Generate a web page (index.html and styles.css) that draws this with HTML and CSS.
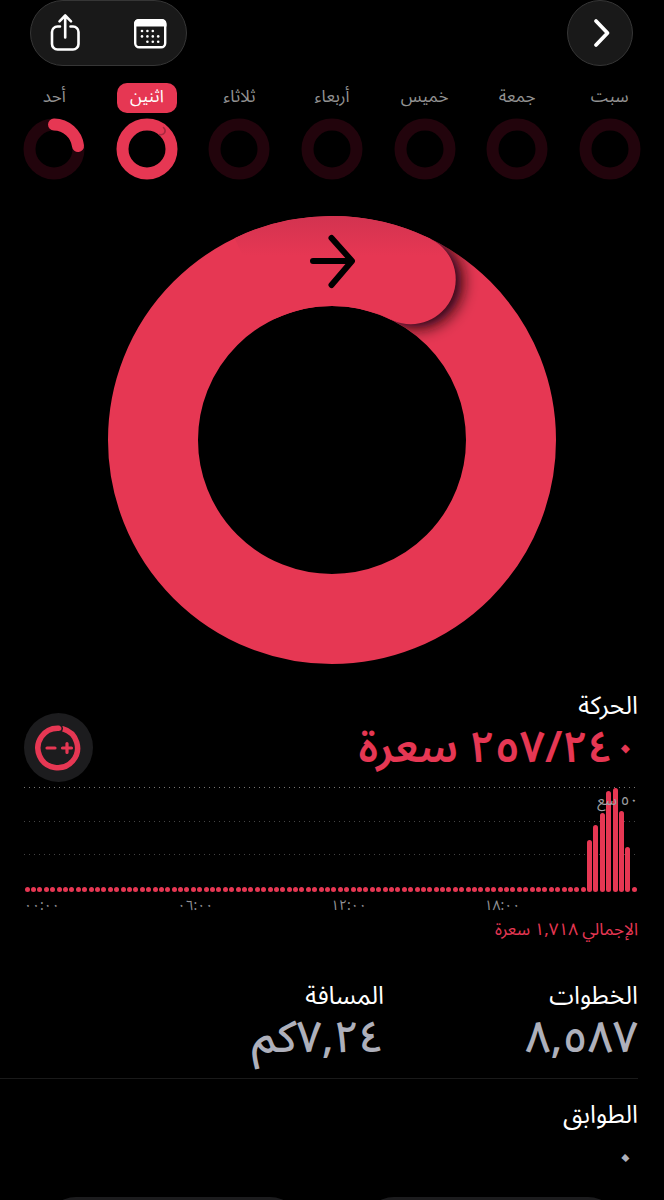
FILE: index.html
```html
<!DOCTYPE html>
<html lang="ar" dir="rtl">
<head>
<meta charset="utf-8">
<meta name="viewport" content="width=device-width, initial-scale=1">
<title>الحركة</title>
<link rel="stylesheet" href="styles.css">
</head>
<body>
<main class="screen">
  <header class="toolbar">
    <button class="glass round" type="button" aria-label="رجوع">
      <svg width="32" height="32" viewBox="0 0 32 32"><path d="M12 4 23.500 16 12 28" fill="none" stroke="#fff" stroke-width="3.800" stroke-linecap="round" stroke-linejoin="round"/></svg>
    </button>
    <div class="glass pill">
      <button class="tool" type="button" aria-label="التقويم">
        <svg width="36" height="40" viewBox="0 0 36 40">
          <rect x="3.200" y="7.200" width="30" height="27" rx="4" fill="none" stroke="#fff" stroke-width="2.400"/>
          <path d="M2 13.500V10.500A4.500 4.500 0 0 1 6.500 6H30A4.500 4.500 0 0 1 34.500 10.500V13.500Z" fill="#fff"/>
          <g fill="#fff"><circle cx="10" cy="18" r="1.300"/><circle cx="15.400" cy="18" r="1.300"/><circle cx="20.800" cy="18" r="1.300"/><circle cx="10" cy="23.400" r="1.300"/><circle cx="15.400" cy="23.400" r="1.300"/><circle cx="20.800" cy="23.400" r="1.300"/><circle cx="26.200" cy="23.400" r="1.300"/><circle cx="15.400" cy="28.800" r="1.300"/><circle cx="20.800" cy="28.800" r="1.300"/><circle cx="26.200" cy="28.800" r="1.300"/></g>
        </svg>
      </button>
      <button class="tool" type="button" aria-label="مشاركة">
        <svg width="36" height="40" viewBox="0 0 36 40"><g fill="none" stroke="#fff" stroke-width="2.600" stroke-linecap="round" stroke-linejoin="round"><path d="M13 13.500H10.500A5.500 5.500 0 0 0 5 19V31A5.500 5.500 0 0 0 10.500 36.500H26A5.500 5.500 0 0 0 31.500 31V19A5.500 5.500 0 0 0 26 13.500H23.500"/><path d="M18.200 24.500V3M12.500 8.300 18.200 2.500 24 8.300"/></g></svg>
      </button>
    </div>
  </header>

  <nav class="week" aria-label="الأسبوع">
    <button class="day" type="button"><span class="name">سبت</span><svg class="mini" viewBox="0 0 62 62"><circle class="track" cx="31" cy="31" r="24.500"/></svg></button>
    <button class="day" type="button"><span class="name">جمعة</span><svg class="mini" viewBox="0 0 62 62"><circle class="track" cx="31" cy="31" r="24.500"/></svg></button>
    <button class="day" type="button"><span class="name">خميس</span><svg class="mini" viewBox="0 0 62 62"><circle class="track" cx="31" cy="31" r="24.500"/></svg></button>
    <button class="day" type="button"><span class="name">أربعاء</span><svg class="mini" viewBox="0 0 62 62"><circle class="track" cx="31" cy="31" r="24.500"/></svg></button>
    <button class="day" type="button"><span class="name">ثلاثاء</span><svg class="mini" viewBox="0 0 62 62"><circle class="track" cx="31" cy="31" r="24.500"/></svg></button>
    <button class="day" type="button" aria-current="date"><span class="name selected">اثنين</span><svg class="mini" viewBox="0 0 62 62"><circle class="move" cx="31" cy="31" r="24.500"/><path d="M47.500 9.500C51 13 48.500 17.500 43.500 16.500" fill="none" stroke="#a82840" stroke-width="1.500" stroke-linecap="round"/></svg></button>
    <button class="day" type="button"><span class="name">أحد</span><svg class="mini" viewBox="0 0 62 62"><circle class="track" cx="31" cy="31" r="24.500"/><path class="move" d="M31 6.500A24.500 24.500 0 0 1 55 28"/></svg></button>
  </nav>

  <svg class="ring" viewBox="0 0 448 448" role="img" aria-label="حلقة الحركة">
    <defs>
      <clipPath id="band"><path clip-rule="evenodd" d="M0 224a224 224 0 1 0 448 0a224 224 0 1 0-448 0ZM90 224a134 134 0 1 0 268 0a134 134 0 1 0-268 0Z"/></clipPath>
      <filter id="soft" x="-50%" y="-50%" width="200%" height="200%"><feGaussianBlur stdDeviation="8"/></filter>
      <linearGradient id="shade" gradientUnits="userSpaceOnUse" x1="0" y1="0" x2="0" y2="40"><stop offset="0" stop-color="#d23350"/><stop offset="1" stop-color="#e63753"/></linearGradient>
    </defs>
    <circle cx="224" cy="224" r="179" fill="none" stroke="#e63753" stroke-width="90"/>
    <circle cx="308" cy="66" r="46" fill="#15030a" filter="url(#soft)" clip-path="url(#band)"/>
    <path d="M146 62.700A179 179 0 0 1 224 45A179 179 0 0 1 302.700 63.200" fill="none" stroke="url(#shade)" stroke-width="90"/>
    <circle cx="302.700" cy="63.200" r="45" fill="url(#shade)"/>
    <path d="M205 45H243.500M223.500 22 244 45 223.500 69" fill="none" stroke="#000" stroke-width="6" stroke-linecap="round" stroke-linejoin="round"/>
  </svg>

  <section class="activity">
    <div class="heading">
      <div>
        <h1 class="label">الحركة</h1>
        <p class="value goal">٢٥٧/٢٤٠ سعرة</p>
      </div>
      <button class="adjust" type="button" aria-label="تغيير الهدف">
        <svg width="48" height="48" viewBox="0 0 48 48"><g fill="none" stroke="#e63753" stroke-linecap="round"><path d="M28 4.900A19.800 19.800 0 1 1 23.500 4.200" stroke-width="5.500"/><path d="M12 24H20M27.500 24H36.500M32 19.500V28.500" stroke-width="3.200"/></g><path d="M26 1.500Q28.500 4.500 26 7.500" fill="none" stroke="#1c1c1e" stroke-width="1.500"/></svg>
      </button>
    </div>
    <div class="chart" dir="ltr">
      <div class="plot">
        <div class="bars" id="bars"></div>
        <span class="scale" dir="rtl">٥٠ سع</span>
      </div>
      <div class="hours"><span>٠٠:٠٠</span><span>٠٦:٠٠</span><span>١٢:٠٠</span><span>١٨:٠٠</span></div>
    </div>
    <p class="total">الإجمالي ١,٧١٨ سعرة</p>
  </section>

  <section class="stats">
    <div class="stat"><h2 class="label">الخطوات</h2><p class="value">٨,٥٨٧</p></div>
    <div class="stat"><h2 class="label">المسافة</h2><p class="value">٧,٢٤كم</p></div>
  </section>
  <section class="stats floors">
    <div class="stat"><h2 class="label">الطوابق</h2><p class="value">٠</p></div>
  </section>
  <footer class="dock"><div class="tab"></div><div class="tab"></div></footer>
</main>
<script src="chart.js"></script>
</body>
</html>
```
FILE: styles.css
```css
* { box-sizing: border-box; }
body {
  margin: 0;
  background: #000;
  color: #fff;
  font-family: "Noto Sans Arabic", "Noto Sans", "DejaVu Sans", sans-serif;
}
button {
  margin: 0;
  padding: 0;
  border: 0;
  background: none;
  color: inherit;
  font: inherit;
}
h1, h2, p { margin: 0; font-weight: 400; }
svg { display: block; }
.screen {
  display: flex;
  flex-direction: column;
  min-height: 100vh;
  overflow: hidden;
}
.toolbar {
  display: flex;
  justify-content: space-between;
  padding: 0 31px 0 30px;
}
.glass {
  display: flex;
  align-items: center;
  height: 66px;
  background: #191919;
  border: 1px solid #363636;
  border-radius: 33px;
}
.round { width: 66px; justify-content: center; }
.pill { width: 157px; justify-content: space-between; padding: 0 18px 0 16px; }
.week {
  display: grid;
  grid-template-columns: repeat(7, 1fr);
  padding: 0 8px;
  margin-top: 17px;
}
.day {
  display: flex;
  flex-direction: column;
  align-items: center;
  gap: 5px;
}
.name {
  height: 30px;
  line-height: 28px;
  font-size: 17px;
  color: #929292;
}
.selected {
  width: 60px;
  border-radius: 10px;
  background: #e63753;
  color: #fff;
}
.mini { width: 62px; height: 62px; }
.track, .move { fill: none; stroke-width: 12; stroke-linecap: round; }
.track { stroke: #22040c; }
.move { stroke: #e63753; }
.ring {
  width: 68%;
  max-width: 448px;
  margin: 36px auto 0;
}
.activity { padding: 24px 26px 0 24px; }
.heading {
  display: flex;
  justify-content: space-between;
  align-items: flex-end;
  padding-bottom: 5px;
}
.label { font-size: 25px; line-height: 36px; }
.value {
  font-size: 44px;
  font-weight: 500;
  line-height: 48px;
  color: #aeb0bb;
}
.goal {
  padding-bottom: 10px;
  font-weight: 600;
  color: #e63753;
}
.adjust {
  display: grid;
  place-items: center;
  width: 69px;
  height: 69px;
  border-radius: 50%;
  background: #1c1c1e;
}
.plot {
  position: relative;
  height: 105px;
  background:
    repeating-linear-gradient(90deg, #777 0 1px, transparent 1px 5px) 0 0 / 100% 1px no-repeat,
    repeating-linear-gradient(90deg, #444 0 1px, transparent 1px 5px) 0 34px / 100% 1px no-repeat,
    repeating-linear-gradient(90deg, #444 0 1px, transparent 1px 5px) 0 67px / 100% 1px no-repeat;
}
.bars {
  display: flex;
  align-items: flex-end;
  height: 100%;
}
.slot {
  flex: 1;
  display: flex;
  justify-content: center;
  align-items: flex-end;
  height: 100%;
}
.bar {
  width: 5px;
  min-height: 5px;
  border-radius: 3px;
  background: #e63753;
}
.scale {
  position: absolute;
  top: 3px;
  right: 0;
  font-size: 15px;
  line-height: 20px;
  color: #a0a0a4;
}
.hours {
  display: grid;
  grid-template-columns: repeat(4, 1fr);
  padding-top: 2px;
  font-size: 14px;
  line-height: 24px;
  color: #929296;
}
.total {
  font-size: 17px;
  line-height: 24px;
  color: #e63753;
}
.stats {
  display: grid;
  grid-template-columns: 254px 1fr;
  margin-right: 26px;
  padding: 36px 0 16px;
  border-bottom: 1px solid #1a1a1a;
}
.floors { border: 0; padding-top: 18px; }
.dock {
  display: grid;
  grid-template-columns: 1fr 1fr;
  gap: 64px;
  height: 3px;
  margin-top: auto;
  padding: 0 46px;
  overflow: hidden;
}
.tab { height: 60px; border-radius: 30px; background: #1c1c1e; }
```
FILE: chart.js
```js
const SLOTS = 96;
const peaks = { 88: 50, 89: 64, 90: 75, 91: 96, 92: 99, 93: 77, 94: 43 };
const bars = document.getElementById("bars");
for (let i = 0; i < SLOTS; i++) {
  const slot = document.createElement("div");
  const bar = document.createElement("div");
  slot.className = "slot";
  bar.className = "bar";
  bar.style.height = (peaks[i] || 0) + "%";
  slot.append(bar);
  bars.append(slot);
}
```
